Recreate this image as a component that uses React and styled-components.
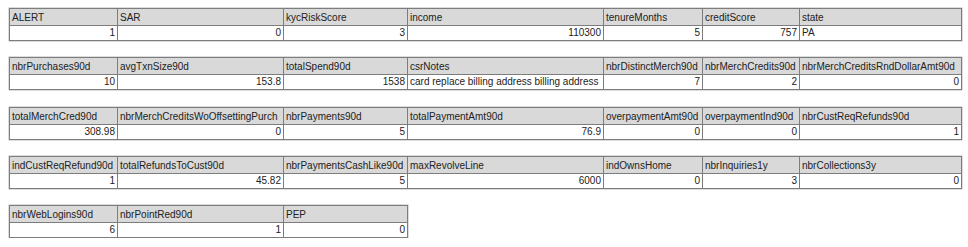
import React from 'react'
import styled, { createGlobalStyle } from 'styled-components'

const GlobalStyle = createGlobalStyle`
    body {
        margin: 0;
        background: #fff;
        font-family: "Liberation Sans", Arial, sans-serif;
        color: #222;
    }
`

// shared column widths, last one loses a pixel to the outer border
const COLS = [108, 166, 124, 196, 99, 97, 162]

const Page = styled.div`
    display: flex;
    flex-direction: column;
    align-items: flex-start;
    gap: 16.3px;
    padding: 8px 0 0 9px;
`

const Grid = styled.div`
    display: grid;
    grid-template-columns: ${(p) => p.$cols};
    grid-template-rows: 17px 14px;
    border: 1px solid #7d7d7d;
    box-shadow: 0 0 0 0.5px #b8b8b8;
`

const Cell = styled.div`
    box-sizing: border-box;
    padding: 0 2px;
    font-size: 10px;
    line-height: 14px;
    white-space: nowrap;
    overflow: hidden;
    border-right: ${(p) => (p.$last ? 'none' : '1px solid #7d7d7d')};
`

const HeadCell = styled(Cell)`
    background: #d9d9d9;
    border-bottom: 1px solid #7d7d7d;
    line-height: 17px;
`

const ValueCell = styled(Cell)`
    background: #fff;
    text-align: ${(p) => (p.$text ? 'left' : 'right')};
`

const tables = [
    [
        ['ALERT', 1],
        ['SAR', 0],
        ['kycRiskScore', 3],
        ['income', 110300],
        ['tenureMonths', 5],
        ['creditScore', 757],
        ['state', 'PA'],
    ],
    [
        ['nbrPurchases90d', 10],
        ['avgTxnSize90d', 153.8],
        ['totalSpend90d', 1538],
        ['csrNotes', 'card replace billing address billing address'],
        ['nbrDistinctMerch90d', 7],
        ['nbrMerchCredits90d', 2],
        ['nbrMerchCreditsRndDollarAmt90d', 0],
    ],
    [
        ['totalMerchCred90d', 308.98],
        ['nbrMerchCreditsWoOffsettingPurch', 0],
        ['nbrPayments90d', 5],
        ['totalPaymentAmt90d', 76.9],
        ['overpaymentAmt90d', 0],
        ['overpaymentInd90d', 0],
        ['nbrCustReqRefunds90d', 1],
    ],
    [
        ['indCustReqRefund90d', 1],
        ['totalRefundsToCust90d', 45.82],
        ['nbrPaymentsCashLike90d', 5],
        ['maxRevolveLine', 6000],
        ['indOwnsHome', 0],
        ['nbrInquiries1y', 3],
        ['nbrCollections3y', 0],
    ],
    [
        ['nbrWebLogins90d', 6],
        ['nbrPointRed90d', 1],
        ['PEP', 0],
    ],
]

const FieldTable = ({ fields }) => {
    const widths = COLS.slice(0, fields.length)
    widths[widths.length - 1] -= 1
    const cols = widths.map((w) => `${w}px`).join(' ')
    const lastIdx = fields.length - 1
    return (
        <Grid $cols={cols}>
            {fields.map(([name], i) => (
                <HeadCell key={`h-${name}`} $last={i === lastIdx}>
                    {name}
                </HeadCell>
            ))}
            {fields.map(([name, value], i) => (
                <ValueCell
                    key={`v-${name}`}
                    $last={i === lastIdx}
                    $text={typeof value === 'string'}
                >
                    {value}
                </ValueCell>
            ))}
        </Grid>
    )
}

const App = () => (
    <>
        <GlobalStyle />
        <Page>
            {tables.map((fields) => (
                <FieldTable key={fields[0][0]} fields={fields} />
            ))}
        </Page>
    </>
)

export default App
